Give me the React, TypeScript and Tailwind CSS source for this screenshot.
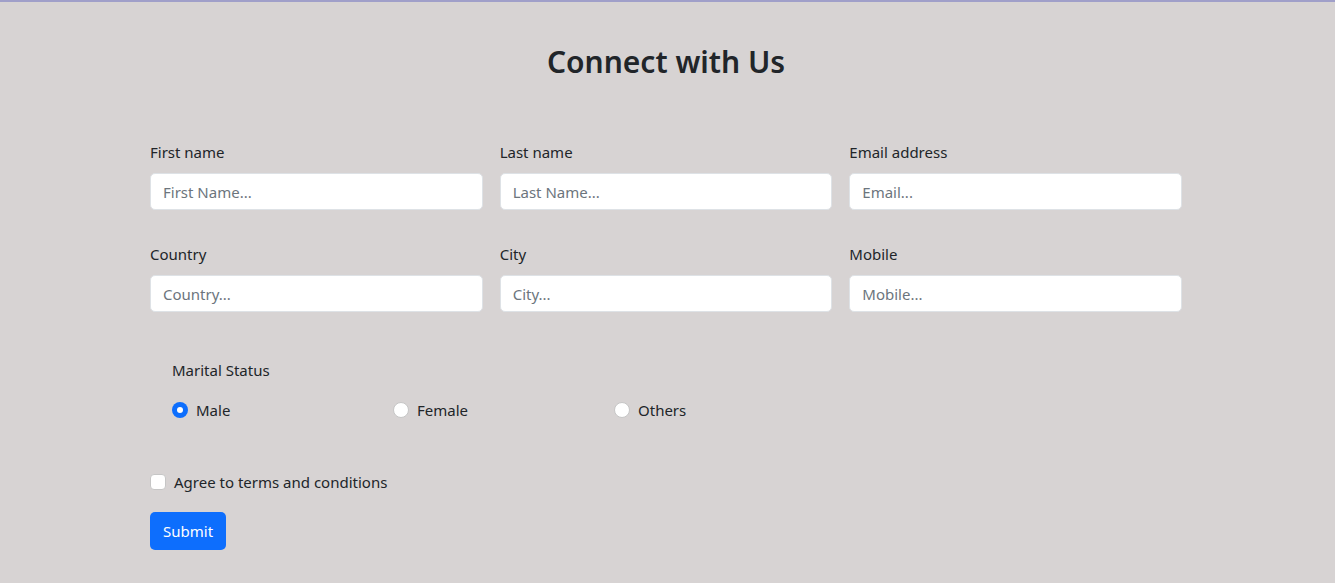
import React, { useState } from "react";

const font = { fontFamily: '"Noto Sans", "Open Sans", sans-serif' };

const fields = [
  { label: "First name", placeholder: "First Name..." },
  { label: "Last name", placeholder: "Last Name..." },
  { label: "Email address", placeholder: "Email..." },
  { label: "Country", placeholder: "Country..." },
  { label: "City", placeholder: "City..." },
  { label: "Mobile", placeholder: "Mobile..." },
];

function Radio({ checked, label, onClick }: { checked: boolean; label: string; onClick: () => void }) {
  return (
    <label className="flex items-center gap-2 w-[221px] cursor-pointer" onClick={onClick}>
      {checked ? (
        <span className="w-4 h-4 rounded-full bg-[#0d6efd] flex items-center justify-center">
          <span className="w-[6px] h-[6px] rounded-full bg-white"></span>
        </span>
      ) : (
        <span className="w-4 h-4 rounded-full bg-white border border-[#c6c6c6]"></span>
      )}
      <span className="text-[15px] text-[#212529]">{label}</span>
    </label>
  );
}

export default function App() {
  const [status, setStatus] = useState("Male");
  const [agree, setAgree] = useState(false);

  return (
    <div className="min-h-[583px] w-full bg-[#d7d3d3] border-t-2 border-[#a09fc9]" style={font}>
      <div className="w-[1032px] ml-[150px]">
        {/* Header */}
        <h2 className="text-center text-[30px] font-semibold text-[#212529] pt-[39px] leading-[42px]">
          Connect with Us
        </h2>

        {/* Inputs */}
        <div className="grid grid-cols-3 gap-x-[17px] gap-y-[32px] mt-[57px]">
          {fields.map(f => (
            <div key={f.label}>
              <div className="text-[15px] text-[#212529] leading-6 mb-[9px]">{f.label}</div>
              <input
                placeholder={f.placeholder}
                className="w-full h-[37px] bg-white rounded-[5px] border border-[#dee2e6] px-3 text-[15px] text-[#212529] placeholder:text-[#6c757d] outline-none"
              />
            </div>
          ))}
        </div>

        {/* Marital status */}
        <div className="pl-[22px] mt-[46px]">
          <div className="text-[15px] text-[#212529] leading-6">Marital Status</div>
          <div className="flex mt-[17px]">
            {["Male", "Female", "Others"].map(s => (
              <Radio key={s} label={s} checked={status === s} onClick={() => setStatus(s)} />
            ))}
          </div>
        </div>

        {/* Terms */}
        <label className="flex items-center gap-2 mt-[49px] cursor-pointer" onClick={() => setAgree(!agree)}>
          <span className={`w-4 h-4 rounded-[4px] border ${agree ? "bg-[#0d6efd] border-[#0d6efd]" : "bg-white border-[#c6c6c6]"}`}></span>
          <span className="text-[15px] text-[#212529]">Agree to terms and conditions</span>
        </label>

        <button className="mt-[19px] h-[38px] px-[13px] bg-[#0d6efd] text-white text-[15px] rounded-[5px]">
          Submit
        </button>
      </div>
    </div>
  );
}
